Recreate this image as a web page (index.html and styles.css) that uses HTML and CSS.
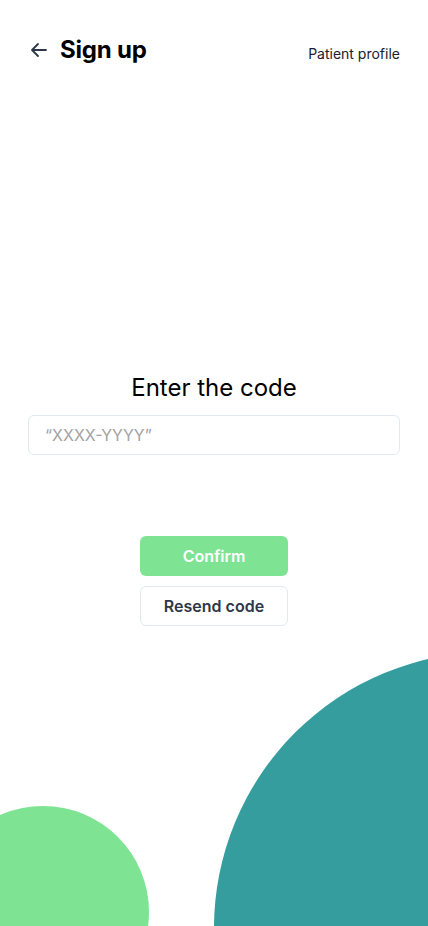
FILE: index.html
```html
<!DOCTYPE html>
<html>
<head>
<meta charset="utf-8">
<link rel="stylesheet" href="styles.css">
</head>
<body>
<div class="page">
  <header class="header">
    <div class="title-group">
      <svg class="back" width="20" height="20" viewBox="0 0 20 20" fill="none" stroke="#2d3748" stroke-width="1.8" stroke-linecap="round" stroke-linejoin="round"><path d="M17 10H3M9 4L3 10l6 6"/></svg>
      <h1 class="title">Sign up</h1>
    </div>
    <span class="profile">Patient profile</span>
  </header>
  <main class="content">
    <h2 class="label">Enter the code</h2>
    <input class="code-input" type="text" placeholder="“XXXX-YYYY”">
    <div class="actions">
      <button class="btn btn-confirm">Confirm</button>
      <button class="btn btn-resend">Resend code</button>
    </div>
  </main>
  <div class="blob blob-teal"></div>
  <div class="blob blob-green"></div>
</div>
</body>
</html>
```
FILE: styles.css
```css
* { box-sizing: border-box; }
html, body { margin: 0; padding: 0; background: #fff; }
body { font-family: Inter, "Noto Sans", sans-serif; color: #1a202c; }
.page { position: relative; width: 428px; height: 926px; overflow: hidden; }
.header { display: flex; align-items: center; justify-content: space-between; padding: 36px 28px 0 29px; height: 64px; }
.title-group { display: flex; align-items: center; gap: 11px; }
.back { display: block; }
.title { margin: 0; font-size: 24px; font-weight: 700; line-height: 28px; color: #000; letter-spacing: -0.2px; }
.profile { font-size: 14px; color: #1a202c; line-height: 20px; margin-top: 8px; }
.content { display: flex; flex-direction: column; align-items: center; padding: 309px 28px 0; }
.label { margin: 0; font-size: 24px; font-weight: 400; line-height: 30px; color: #000; }
.code-input { margin-top: 12px; width: 100%; height: 40px; border: 1px solid #e2e8f0; border-radius: 6px; padding: 0 16px; font-family: inherit; font-size: 16px; color: #1a202c; outline: none; }
.code-input::placeholder { color: #a3a3a3; }
.actions { display: flex; flex-direction: column; gap: 10px; margin-top: 81px; }
.btn { width: 148px; height: 40px; border-radius: 6px; font-family: inherit; font-size: 16px; font-weight: 600; cursor: pointer; }
.btn-confirm { background: #7ee494; color: #fff; border: none; }
.btn-resend { background: #fff; color: #2d3748; border: 1px solid #e2e8f0; }
.blob { position: absolute; border-radius: 50%; }
.blob-teal { width: 552px; height: 552px; left: 214px; top: 652px; background: #359d9e; }
.blob-green { width: 212px; height: 212px; left: -63px; top: 806px; background: #7ee494; }
```
